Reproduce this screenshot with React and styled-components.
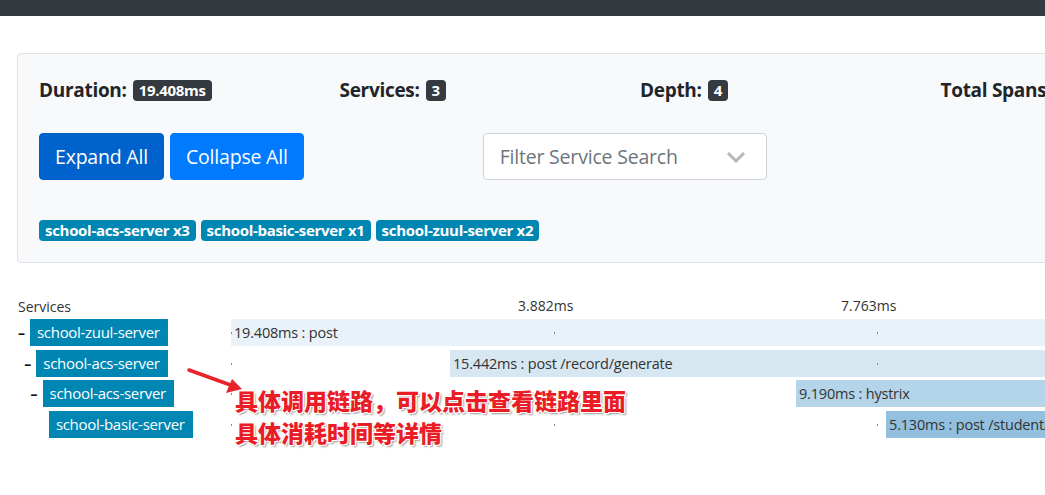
import React from 'react';
import styled, { createGlobalStyle } from 'styled-components';

const GlobalStyle = createGlobalStyle`
  body {
    margin: 0;
    background: #fff;
    font-family: "Open Sans", "Noto Sans", "Noto Sans CJK SC", sans-serif;
    color: #212529;
    overflow: hidden;
  }
`;

const SCALE = 323 / 3.8816; // px per ms

const services = [
  { name: 'school-acs-server', count: 3 },
  { name: 'school-basic-server', count: 1 },
  { name: 'school-zuul-server', count: 2 },
];

const spans = [
  { depth: 0, service: 'school-zuul-server', start: 0, duration: 19.408, label: 'post', bg: '#e9f2f9', toggle: true },
  { depth: 1, service: 'school-acs-server', start: 2.632, duration: 15.442, label: 'post /record/generate', bg: '#d7e7f2', toggle: true },
  { depth: 2, service: 'school-acs-server', start: 6.79, duration: 9.19, label: 'hystrix', bg: '#b4d4e9', toggle: true },
  { depth: 3, service: 'school-basic-server', start: 7.872, duration: 5.13, label: 'post /student/get', bg: '#93c0df', toggle: false },
];

const ticks = [0, 3.882, 7.763, 11.645, 15.526];

const App = () => {
  return (
    <Page>
      <GlobalStyle />
      <TopBar />
      <Summary>
        <Stats>
          <Stat>Duration: <Badge>19.408ms</Badge></Stat>
          <Stat>Services: <Badge>3</Badge></Stat>
          <Stat>Depth: <Badge>4</Badge></Stat>
          <Stat>Total Spans: <Badge>4</Badge></Stat>
        </Stats>
        <Controls>
          <Button $active>Expand All</Button>
          <Button>Collapse All</Button>
          <Select>
            <span>Filter Service Search</span>
            <svg width="20" height="12" viewBox="0 0 20 12">
              <path d="M2 2 L10 10 L18 2" fill="none" stroke="#b3b8bd" strokeWidth="3" />
            </svg>
          </Select>
        </Controls>
        <ServiceTags>
          {services.map((s) => (
            <ServiceTag key={s.name}>{s.name} x{s.count}</ServiceTag>
          ))}
        </ServiceTags>
      </Summary>

      <Timeline>
        <HeaderRow>
          <NameCol>Services</NameCol>
          <Scale>
            {ticks.slice(1).map((t, i) => (
              <TickLabel key={t} style={{ left: (i + 1) * 323 - 36 }}>{t}ms</TickLabel>
            ))}
          </Scale>
        </HeaderRow>
        {spans.map((s, i) => (
          <SpanRow key={i}>
            <NameCol>
              <Indent $depth={s.depth}>
                <Toggle>{s.toggle ? '–' : ''}</Toggle>
                <ServiceLabel>{s.service}</ServiceLabel>
              </Indent>
            </NameCol>
            <BarArea>
              <Bar style={{ left: s.start * SCALE, width: s.duration * SCALE, background: s.bg }}>
                {s.duration.toFixed(3)}ms : {s.label}
              </Bar>
              {[0, 1, 2, 3, 4].map((k) => (
                <Dot key={k} style={{ left: k * 323 }} />
              ))}
            </BarArea>
          </SpanRow>
        ))}

        <Annotation>
          <svg width="70" height="30" viewBox="0 0 70 30">
            <path d="M3 3 L50 20" stroke="#e8232a" strokeWidth="3.5" strokeLinecap="round" />
            <path d="M56 22 L40 26 L46 12 Z" fill="#e8232a" />
          </svg>
          <Note>
            具体调用链路，可以点击查看链路里面<br />
            具体消耗时间等详情
          </Note>
        </Annotation>
      </Timeline>
    </Page>
  );
};

const Page = styled.div`
  width: 1045px;
  height: 495px;
  overflow: hidden;
`;

const TopBar = styled.div`
  height: 16px;
  background: #343a40;
`;

const Summary = styled.section`
  margin: 37px 0 0 17px;
  width: 1300px;
  box-sizing: border-box;
  padding: 22px 21px 21px;
  background: #f8f9fa;
  border: 1px solid #dee2e6;
  border-radius: 4px;
`;

const Stats = styled.div`
  display: grid;
  grid-template-columns: repeat(4, 300.5px);
`;

const Stat = styled.div`
  font-size: 19px;
  font-weight: 700;
  line-height: 28px;
  display: flex;
  align-items: center;
  gap: 6px;
  letter-spacing: -0.3px;
`;

const Badge = styled.span`
  display: inline-block;
  background: #343a40;
  color: #fff;
  font-size: 15px;
  font-weight: 700;
  line-height: 21px;
  padding: 0 6px;
  border-radius: 4px;
  letter-spacing: -0.3px;
`;

const Controls = styled.div`
  display: flex;
  align-items: center;
  gap: 6px;
  margin-top: 29px;
`;

const Button = styled.button`
  height: 47px;
  padding: 0 15px;
  border: 1px solid ${(p) => (p.$active ? '#005cbf' : '#007bff')};
  border-radius: 4px;
  background: ${(p) => (p.$active ? '#0062cc' : '#007bff')};
  color: #fff;
  font-family: inherit;
  font-size: 19.5px;
  letter-spacing: -0.2px;
`;

const Select = styled.div`
  margin-left: 173px;
  width: 284px;
  height: 47px;
  box-sizing: border-box;
  display: flex;
  align-items: center;
  justify-content: space-between;
  padding: 0 20px 0 16px;
  background: #fff;
  border: 1px solid #ced4da;
  border-radius: 4px;
  color: #6c757d;
  font-size: 19.5px;
  letter-spacing: -0.2px;
`;

const ServiceTags = styled.div`
  display: flex;
  gap: 5px;
  margin-top: 40px;
`;

const ServiceTag = styled.span`
  background: #0086b3;
  color: #fff;
  font-size: 15px;
  font-weight: 700;
  line-height: 21px;
  padding: 0 6px;
  border-radius: 4px;
  letter-spacing: -0.3px;
`;

const Timeline = styled.section`
  position: relative;
  margin-top: 33px;
  padding-left: 18px;
  color: #333;
  font-size: 14px;
`;

const HeaderRow = styled.div`
  display: flex;
  height: 20px;
  align-items: center;
  margin-bottom: 3px;
`;

const NameCol = styled.div`
  width: 213px;
  flex: none;
`;

const Scale = styled.div`
  position: relative;
  flex: 1;
  height: 20px;
`;

const TickLabel = styled.span`
  position: absolute;
  top: 1px;
  line-height: 18px;
`;

const SpanRow = styled.div`
  display: flex;
  height: 27px;
  margin-bottom: 3.5px;
`;

const Indent = styled.div`
  display: flex;
  align-items: center;
  height: 100%;
  padding-left: ${(p) => p.$depth * 6.3}px;
`;

const Toggle = styled.span`
  width: 12px;
  flex: none;
  font-size: 14px;
  font-weight: 700;
  color: #111;
`;

const ServiceLabel = styled.span`
  height: 27px;
  line-height: 27px;
  padding: 0 8px 0 7px;
  background: #0086b3;
  color: #fff;
  font-size: 15px;
  letter-spacing: -0.3px;
`;

const BarArea = styled.div`
  position: relative;
  flex: 1;
  height: 27px;
`;

const Bar = styled.div`
  position: absolute;
  top: 0;
  height: 27px;
  line-height: 27px;
  padding-left: 3px;
  box-sizing: border-box;
  white-space: nowrap;
  font-size: 14.5px;
  color: #333;
  letter-spacing: -0.2px;
`;

const Dot = styled.span`
  position: absolute;
  top: 13px;
  width: 1px;
  height: 2px;
  background: #6b8fb0;
  z-index: 1;
`;

const Annotation = styled.div`
  position: absolute;
  left: 186px;
  top: 71px;
  z-index: 2;
`;

const Note = styled.div`
  position: absolute;
  left: 49px;
  top: 17px;
  white-space: nowrap;
  font-family: "Noto Sans CJK SC", sans-serif;
  font-weight: 900;
  font-size: 23px;
  line-height: 32px;
  color: #ea1d26;
  text-shadow: 1px 1px 0 #fff, -1px -1px 0 #fff, 1px -1px 0 #fff, -1px 1px 0 #fff, 2px 2px 2px #999;
`;

export default App;
